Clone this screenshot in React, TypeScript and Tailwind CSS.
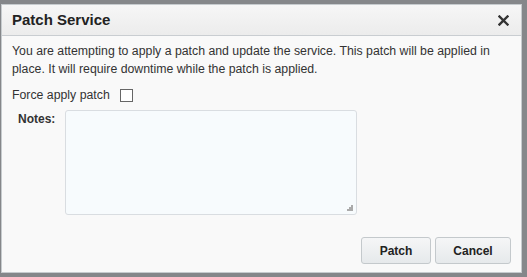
export default function App() {
  return (
    <div
      className="w-[527px] h-[277px] bg-[#85878a] pt-[4px] pl-[1px] overflow-hidden"
      style={{ fontFamily: '"Liberation Sans", Arial, sans-serif' }}
    >
      <div className="w-[521px] h-[269px] bg-[#f9f9f9] border border-[#c6cbce] flex flex-col">
        <div className="h-[31px] flex items-center justify-between pl-[10px] pr-[12px] bg-gradient-to-b from-[#f6f6f6] to-[#ececec] border-b border-[#c9cdd1]">
          <span className="text-[15px] font-bold text-[#222] mt-[1px]">Patch Service</span>
          <svg width="11" height="11" viewBox="0 0 11 11">
            <path d="M1.5 1.5 L9.5 9.5 M9.5 1.5 L1.5 9.5" stroke="#333" strokeWidth="2.4" strokeLinecap="square" />
          </svg>
        </div>
        <div className="flex-1 flex flex-col px-[10px] pt-[6px] text-[12.3px] text-[#333]">
          <p className="leading-[18px]">
            You are attempting to apply a patch and update the service. This patch will be applied in place. It will
            require downtime while the patch is applied.
          </p>
          <div className="flex items-center mt-[10px] h-[14px]">
            <span>Force apply patch</span>
            <span className="ml-[10px] w-[13px] h-[13px] border border-[#666] bg-white" />
          </div>
          <div className="flex mt-[8px]">
            <span className="w-[53px] pl-[6px] font-bold text-[12px] text-[#333]">Notes:</span>
            <div className="relative w-[292px] h-[105px] border border-[#d9dde1] rounded-[3px] bg-[#f7fbfd]">
              <svg className="absolute right-[3px] bottom-[3px]" width="7" height="7" viewBox="0 0 7 7">
                <rect x="5" y="1" width="2" height="2" fill="#aaa" />
                <rect x="3" y="3" width="2" height="2" fill="#aaa" />
                <rect x="5" y="3" width="2" height="2" fill="#aaa" />
                <rect x="1" y="5" width="2" height="2" fill="#aaa" />
                <rect x="3" y="5" width="2" height="2" fill="#aaa" />
                <rect x="5" y="5" width="2" height="2" fill="#aaa" />
              </svg>
            </div>
          </div>
          <div className="flex justify-end gap-[4px] mt-[22px]">
            <button className="w-[70px] h-[27px] border border-[#c4c9cc] rounded-[3px] bg-gradient-to-b from-[#f5f6f7] to-[#e6e9eb] text-[12px] font-bold text-[#222]">
              Patch
            </button>
            <button className="w-[76px] h-[27px] border border-[#c4c9cc] rounded-[3px] bg-gradient-to-b from-[#f5f6f7] to-[#e6e9eb] text-[12px] font-bold text-[#222]">
              Cancel
            </button>
          </div>
        </div>
      </div>
    </div>
  );
}
